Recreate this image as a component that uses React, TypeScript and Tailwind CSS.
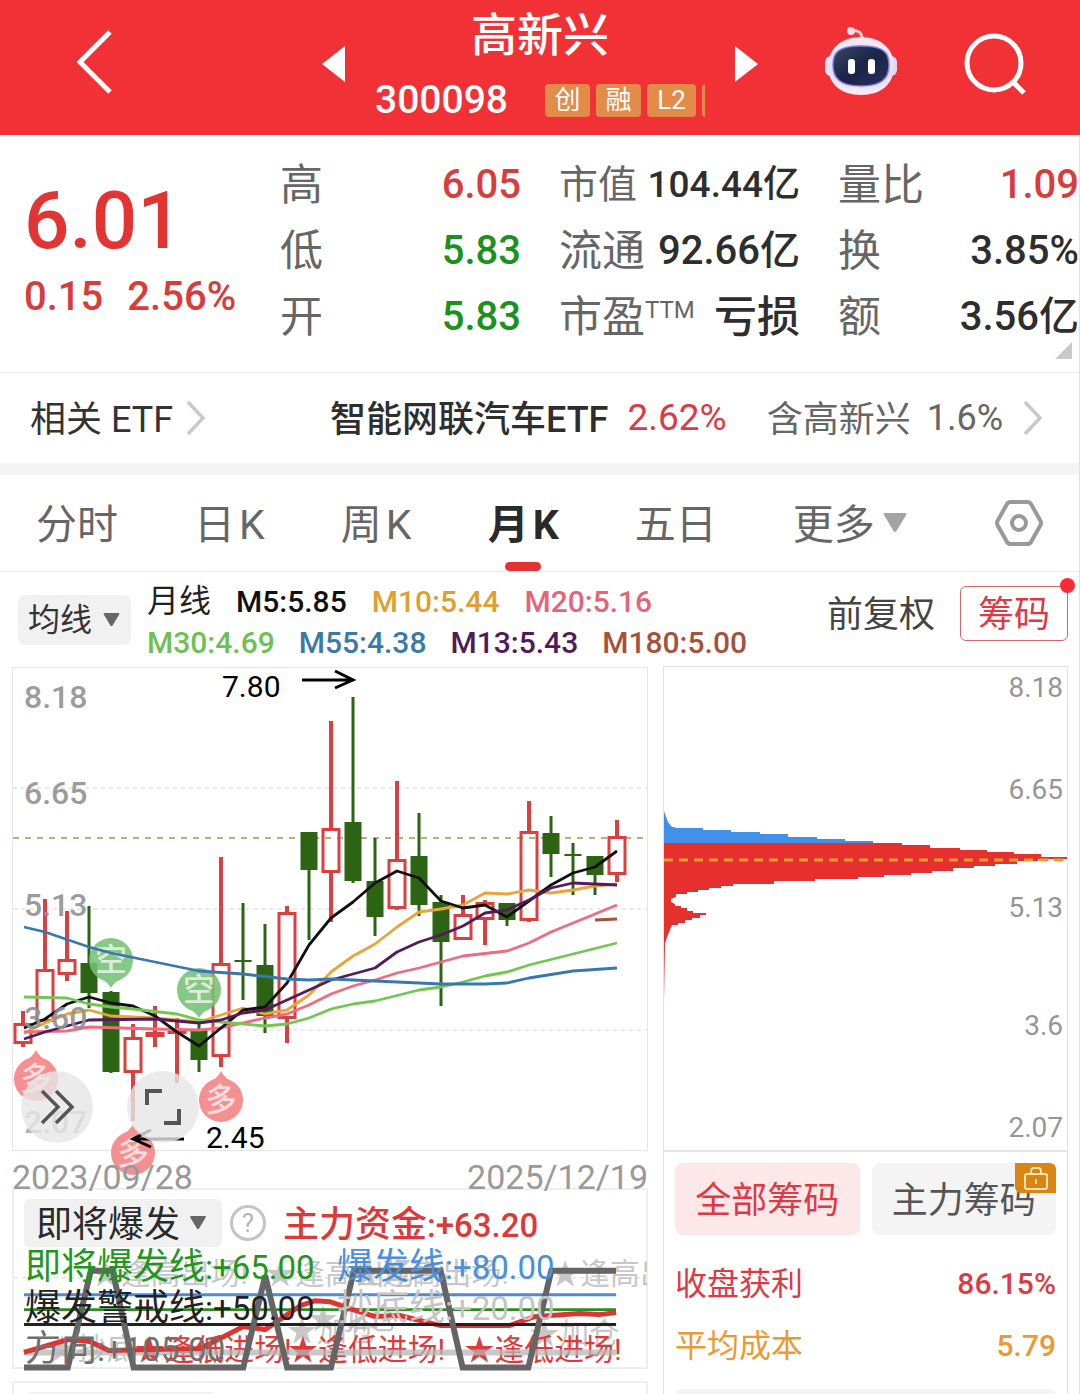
import React from "react";

const FONT = "font-['Roboto','Noto_Sans_CJK_SC',sans-serif]";

type Candle = { x: number; hi: number; top: number; bot: number; lo: number; up: boolean };

const CANDLES: Candle[] = [
  { x: 23, hi: 1011, top: 1023, bot: 1044, lo: 1047, up: true },
  { x: 45, hi: 899, top: 969, bot: 1022, lo: 1022, up: true },
  { x: 67, hi: 911, top: 959, bot: 975, lo: 981, up: true },
  { x: 89, hi: 906, top: 963, bot: 993, lo: 1008, up: false },
  { x: 111, hi: 991, top: 992, bot: 1072, lo: 1073, up: false },
  { x: 133, hi: 1024, top: 1037, bot: 1073, lo: 1121, up: true },
  { x: 155, hi: 1006, top: 1032, bot: 1037, lo: 1047, up: true },
  { x: 177, hi: 1018, top: 1031, bot: 1034, lo: 1083, up: true },
  { x: 199, hi: 1023, top: 1030, bot: 1060, lo: 1072, up: false },
  { x: 221, hi: 857, top: 963, bot: 1057, lo: 1067, up: true },
  { x: 243, hi: 903, top: 960, bot: 962, lo: 1000, up: false },
  { x: 265, hi: 924, top: 965, bot: 1016, lo: 1033, up: false },
  { x: 287, hi: 906, top: 912, bot: 1019, lo: 1043, up: true },
  { x: 309, hi: 832, top: 832, bot: 870, lo: 940, up: false },
  { x: 331, hi: 721, top: 828, bot: 873, lo: 922, up: true },
  { x: 353, hi: 697, top: 822, bot: 881, lo: 883, up: false },
  { x: 375, hi: 838, top: 881, bot: 917, lo: 936, up: false },
  { x: 397, hi: 781, top: 859, bot: 909, lo: 910, up: true },
  { x: 419, hi: 813, top: 856, bot: 905, lo: 916, up: false },
  { x: 441, hi: 895, top: 902, bot: 942, lo: 1006, up: false },
  { x: 463, hi: 895, top: 914, bot: 940, lo: 940, up: true },
  { x: 485, hi: 900, top: 902, bot: 920, lo: 945, up: true },
  { x: 507, hi: 903, top: 903, bot: 920, lo: 926, up: false },
  { x: 529, hi: 801, top: 831, bot: 921, lo: 922, up: true },
  { x: 551, hi: 816, top: 833, bot: 854, lo: 877, up: false },
  { x: 573, hi: 843, top: 854, bot: 856, lo: 895, up: false },
  { x: 595, hi: 856, top: 856, bot: 875, lo: 895, up: false },
  { x: 617, hi: 820, top: 836, bot: 875, lo: 882, up: true },
];

const AVERAGES: { color: string; points: string }[] = [
  { color: "#e9a53a", points: "24,1033 45,1023 67,1014 89,1010 111,1016 155,1018 199,1022 221,1015 243,1008 265,1014 287,1010 309,995 331,972 353,956 375,944 397,927 419,912 441,909 463,905 485,893 507,894 529,890 551,893 573,890 595,886 617,884" },
  { color: "#ee6c82", points: "24,1032 67,1031 89,1027 155,1029 199,1030 221,1028 265,1018 287,1014 309,1005 331,994 353,986 375,980 397,973 419,968 441,962 463,956 507,951 529,943 551,932 595,914 617,905" },
  { color: "#111111", points: "24,1028 45,1019 67,1004 89,997 111,1003 133,1006 155,1016 177,1032 199,1046 221,1028 243,1010 265,1007 287,983 309,945 331,918 353,902 375,883 397,871 419,878 441,901 463,908 485,905 507,917 529,901 551,885 573,873 595,867 617,851" },
  { color: "#73c653", points: "24,997 67,998 89,1004 111,1007 133,1009 177,1014 199,1020 221,1022 265,1026 287,1024 309,1018 331,1009 353,1004 375,1001 419,990 441,987 463,982 485,976 507,972 529,965 573,954 617,943" },
  { color: "#541a5c", points: "24,1039 45,1032 89,1020 155,1019 199,1023 221,1020 243,1013 265,1010 287,1000 309,990 331,980 353,974 375,968 397,952 419,942 441,935 463,926 485,913 507,910 529,900 551,888 573,883 617,885" },
  { color: "#3778ae", points: "24,927 45,932 89,947 111,953 155,962 199,971 243,974 287,979 309,980 331,979 375,981 397,982 441,984 485,984 507,983 529,978 573,971 617,968" },
  { color: "#a4523c", points: "595,920 617,919" },
];

const PINS = [
  { x: 111, y: 960, long: false },
  { x: 199, y: 990, long: false },
  { x: 36, y: 1079, long: true },
  { x: 133, y: 1153, long: true },
  { x: 221, y: 1100, long: true },
];

function PriceChart() {
  return (
    <svg viewBox="13 668 634 482" className="block w-full overflow-visible" role="img" aria-label="月K线图">
      {[788, 909, 1030].map((y) => (
        <line key={y} x1="13" x2="647" y1={y} y2={y} stroke="#e4e4e4" strokeWidth="1.5" strokeDasharray="4 4" />
      ))}
      <line x1="13" x2="643" y1="838" y2="838" stroke="#c9a878" strokeWidth="2" strokeDasharray="6 6" />
      {CANDLES.map((c) => {
        const h = c.bot - c.top;
        if (!c.up)
          return (
            <g key={c.x} fill="#2d6413">
              <rect x={c.x - 1.5} y={c.hi} width="3" height={c.lo - c.hi} />
              <rect x={c.x - 8.5} y={c.top} width="17" height={h} />
            </g>
          );
        return (
          <g key={c.x} fill="#d9403f">
            <rect x={c.x - 2} y={c.hi} width="4" height={c.top - c.hi} />
            <rect x={c.x - 2} y={c.bot} width="4" height={c.lo - c.bot} />
            {h < 8 ? (
              <rect x={c.x - 9.5} y={c.top} width="19" height={h} />
            ) : (
              <rect x={c.x - 8} y={c.top + 1.5} width="16" height={h - 3} fill="none" stroke="#d9403f" strokeWidth="3" />
            )}
          </g>
        );
      })}
      {PINS.map((p) => (
        <g key={p.x} opacity="0.88">
          <g fill={p.long ? "#f58080" : "#76c176"}>
            <circle cx={p.x} cy={p.y} r="22" />
            {p.long ? (
              <path d={`M${p.x - 14} ${p.y - 16} Q${p.x - 3} ${p.y - 22} ${p.x} ${p.y - 29} Q${p.x + 3} ${p.y - 22} ${p.x + 14} ${p.y - 16}Z`} />
            ) : (
              <path d={`M${p.x - 14} ${p.y + 16} Q${p.x - 3} ${p.y + 22} ${p.x} ${p.y + 28} Q${p.x + 3} ${p.y + 22} ${p.x + 14} ${p.y + 16}Z`} />
            )}
          </g>
          <text x={p.x} y={p.y + 11} textAnchor="middle" fontSize="32" fontWeight="500" fill="#fff" fillOpacity="0.7">
            {p.long ? "多" : "空"}
          </text>
        </g>
      ))}
      <g fill="none" strokeWidth="2.8" strokeLinejoin="round">
        {AVERAGES.map((a) => (
          <polyline key={a.color} points={a.points} stroke={a.color} />
        ))}
      </g>
      <g fill="#929292" fontSize="32" fontWeight="500" fillOpacity="0.92">
        <text x="24" y="708">8.18</text>
        <text x="24" y="804">6.65</text>
        <text x="24" y="916">5.13</text>
        <text x="24" y="1029">3.60</text>
        <text x="24" y="1133" fillOpacity="0.7">2.07</text>
      </g>
      <g fontSize="30" fill="#000">
        <text x="222" y="697">7.80</text>
        <text x="206" y="1148">2.45</text>
      </g>
      <g fill="none" stroke="#000" strokeWidth="3">
        <path d="M302 680H352M335 671L353 680L335 688" />
        <path d="M184 1139H134M151 1130L133 1139L151 1147" />
      </g>
    </svg>
  );
}

const GHOSTS = [
  { x: 90, y: 1284, t: "★逢高出场!" },
  { x: 265, y: 1284, t: "★逢高出场!" },
  { x: 352, y: 1284, t: "★逢高出场!" },
  { x: 551, y: 1284, t: "★逢高出场!" },
  { x: 308, y: 1329, t: "★加仓" },
  { x: 287, y: 1341, t: "★加仓" },
  { x: 530, y: 1344, t: "★加仓" },
  { x: 46, y: 1360, t: "★抄底" },
];

function SignalChart() {
  return (
    <svg viewBox="13 1190 634 178" className="block w-full overflow-visible" role="img" aria-label="即将爆发指标">
      <clipPath id="plot">
        <rect x="13" y="1190" width="635" height="178" />
      </clipPath>
      <line x1="13" x2="647" y1="1278" y2="1278" stroke="#e4e4e4" strokeWidth="1.5" strokeDasharray="4 4" />
      <g fontSize="30" fill="#bdbdbd" fillOpacity="0.85" clipPath="url(#plot)">
        {GHOSTS.map((g) => (
          <text key={`${g.x}-${g.y}`} x={g.x} y={g.y}>{g.t}</text>
        ))}
      </g>
      <g fontSize="30" fill="#dc3b3b">
        {[134, 288, 465].map((x) => (
          <text key={x} x={x} y="1361">★逢低进场!</text>
        ))}
      </g>
      <g fill="none">
        <path d="M23 1353H617" stroke="#b5b5b5" strokeOpacity="0.75" strokeWidth="6" />
        <path d="M23 1295H617" stroke="#4a8ae0" strokeWidth="3" />
        <path d="M23 1310H617" stroke="#2b8f1f" strokeWidth="3" />
        <polyline
          points="23,1353 67,1340 89,1342 108,1351 150,1350 200,1349 243,1327 265,1330 300,1306 315,1301 330,1302 350,1309 375,1317 400,1316 441,1326 510,1326 535,1317 580,1314 600,1315 617,1313"
          stroke="#dd3532"
          strokeWidth="5"
        />
        <path d="M23 1325H617" stroke="#222" strokeWidth="3" />
        <polyline
          points="23,1368 67,1368 90,1271 112,1271 133,1368 243,1368 265,1276 287,1368 331,1368 354,1271 441,1271 463,1368 529,1368 552,1271 617,1271"
          stroke="#656565"
          strokeWidth="6"
        />
      </g>
    </svg>
  );
}

const CHIP_BLUE =
  "M664 811L668 822L672 827H675V828H703V830H731V832H760V834H788V837H817V839H845V841H873V844H664Z";
const CHIP_RED =
  "M664 843H902V845H930V848H960V850H987V852H1014V854H1041V857H1067V859H1038V861H1017V864H995V866H974V868H953V871H932V873H911V875H884V877H858V879H815V881H774V884H733V886H721V888H709V890H698V892H687V894H676V897L671 899V902L675 904V906H681V908H687V911H693V913H706V915H700V918H692V920H685V923H678V925H672L667 937L665 944L664 1000Z";

function ChipChart() {
  return (
    <svg viewBox="664 667 403 483" className="block w-full" role="img" aria-label="筹码分布">
      <path d={CHIP_BLUE} fill="#4390ea" />
      <path d={CHIP_RED} fill="#e6302e" />
      <line x1="664" x2="1067" y1="860" y2="860" stroke="#f39a30" strokeWidth="3" strokeDasharray="9 6" />
      <g fontSize="28" fill="#969696" textAnchor="end">
        <text x="1063" y="697">8.18</text>
        <text x="1063" y="799">6.65</text>
        <text x="1063" y="917">5.13</text>
        <text x="1063" y="1035">3.6</text>
        <text x="1063" y="1137">2.07</text>
      </g>
    </svg>
  );
}

function Robot() {
  return (
    <svg viewBox="824 26 74 70" className="h-[70px] w-[74px]" aria-hidden="true">
      <defs>
        <linearGradient id="shell" x1="0" y1="0" x2="0" y2="1">
          <stop offset="0" stopColor="#fbe9f0" />
          <stop offset="0.6" stopColor="#dfe0fb" />
          <stop offset="1" stopColor="#f7ecf8" />
        </linearGradient>
        <linearGradient id="visor" x1="0" y1="0" x2="1" y2="1">
          <stop offset="0" stopColor="#3a4668" />
          <stop offset="0.5" stopColor="#1b2545" />
          <stop offset="1" stopColor="#2a2f60" />
        </linearGradient>
      </defs>
      <path d="M852 32C859 31 862 34 862 40" fill="none" stroke="#f6c9d8" strokeWidth="3" />
      <circle cx="851" cy="32" r="4" fill="#f9dbe6" />
      <rect x="825" y="57" width="12" height="20" rx="6" fill="#f3e4f3" />
      <rect x="885" y="57" width="12" height="20" rx="6" fill="#e3d5f5" />
      <path d="M861 38C883 38 894 52 894 67C894 85 881 96 861 96C841 96 828 85 828 67C828 52 839 38 861 38Z" fill="url(#shell)" />
      <path d="M861 47C883 47 889 53 889 66C889 80 881 87 861 87C841 87 833 80 833 66C833 53 839 47 861 47Z" fill="url(#visor)" stroke="#7a7be0" strokeWidth="1.5" />
      <rect x="848" y="60" width="7" height="15" rx="3" fill="#fff" />
      <rect x="868" y="60" width="7" height="15" rx="3" fill="#fff" />
    </svg>
  );
}

function Header() {
  return (
    <header className="grid h-[135px] grid-cols-[1fr_436px_1fr] items-center bg-[#f13135] text-white">
      <button aria-label="返回" className="ml-[74px] w-10 justify-self-start pb-3">
        <svg viewBox="0 0 40 64" className="h-16 w-10" fill="none" stroke="#fff" strokeWidth="5">
          <path d="M36 2L6 32L36 62" />
        </svg>
      </button>
      <div className="flex h-full items-center justify-between">
        <button aria-label="上一只" className="pb-2">
          <svg viewBox="0 0 24 36" className="h-9 w-6" fill="#fff"><path d="M0 18L23 0V36Z" /></svg>
        </button>
        <div className="flex h-full w-[330px] flex-col items-center">
          <h1 className="mt-[5px] text-[46px] font-medium leading-[60px]">高新兴</h1>
          <div className="mt-[11px] flex w-full items-center overflow-hidden">
            <span className="w-[170px] shrink-0 text-[39px] font-medium leading-[48px]">300098</span>
            <div className="flex gap-[6px] text-[26px] leading-[33px]">
              <span className="w-[45px] shrink-0 rounded bg-[#e38b49] text-center">创</span>
              <span className="w-[45px] shrink-0 rounded bg-[#e38b49] text-center">融</span>
              <span className="w-[49px] shrink-0 rounded bg-[#e38b49] text-center">L2</span>
              <span className="w-[45px] shrink-0 rounded bg-[#e38b49]" />
            </div>
          </div>
        </div>
        <button aria-label="下一只" className="pb-2">
          <svg viewBox="0 0 24 36" className="h-9 w-6" fill="#fff"><path d="M24 18L1 0V36Z" /></svg>
        </button>
      </div>
      <div className="flex items-center justify-between pb-4 pl-[66px] pr-[52px]">
        <button aria-label="智能助手"><Robot /></button>
        <button aria-label="搜索" className="pt-2">
          <svg viewBox="0 0 64 64" className="size-16" fill="none" stroke="#fff" strokeWidth="5">
            <circle cx="30" cy="31" r="27" />
            <path d="M49 50L60 61" />
          </svg>
        </button>
      </div>
    </header>
  );
}

const RED = "text-[#d93c3c]";
const GREEN = "text-[#1d901d]";
const DARK = "text-[#2e2e2e]";

const QUOTES: { label: string; sup?: string; value: string; tone: string; small?: boolean }[] = [
  { label: "高", value: "6.05", tone: RED },
  { label: "市值", value: "104.44亿", tone: DARK, small: true },
  { label: "量比", value: "1.09", tone: RED },
  { label: "低", value: "5.83", tone: GREEN },
  { label: "流通", value: "92.66亿", tone: DARK },
  { label: "换", value: "3.85%", tone: DARK },
  { label: "开", value: "5.83", tone: GREEN },
  { label: "市盈", sup: "TTM", value: "亏损", tone: DARK },
  { label: "额", value: "3.56亿", tone: DARK },
];

function QuotePanel() {
  return (
    <section className="relative flex h-[238px] border-b border-[#ededed] pt-[17px]">
      <div className="w-[280px] shrink-0 pl-6">
        <div className="pt-[21px] text-[80px] font-medium leading-[96px] text-[#e33434]">6.01</div>
        <div className="flex gap-6 text-[40px] font-medium leading-[56px] text-[#d93c3c]">
          <span>0.15</span>
          <span>2.56%</span>
        </div>
      </div>
      <dl className="grid flex-1 auto-rows-[66px] grid-cols-3 gap-x-[38px]">
        {QUOTES.map((q) => (
          <div key={q.label} className="flex items-center justify-between whitespace-nowrap leading-[66px]">
            <dt className={q.small ? "text-[39px] text-[#666]" : "text-[43px] text-[#666]"}>
              {q.label}
              {q.sup && <sup className="top-[-14px] text-[24px] leading-none">{q.sup}</sup>}
            </dt>
            <dd className={`${q.small ? "text-[37px]" : q.sup ? "text-[43px]" : "text-[40px]"} font-medium ${q.tone}`}>{q.value}</dd>
          </div>
        ))}
      </dl>
      <svg viewBox="0 0 17 17" className="absolute bottom-[13px] right-[7px] size-[17px]" fill="#c9c9c9" aria-hidden="true">
        <path d="M17 0V17H0Z" />
      </svg>
    </section>
  );
}

function Chevron() {
  return (
    <svg viewBox="0 0 20 36" className="h-9 w-5 shrink-0" fill="none" stroke="#c9c9c9" strokeWidth="3.5" aria-hidden="true">
      <path d="M2 2L17 18L2 34" />
    </svg>
  );
}

function Caret({ className }: { className: string }) {
  return (
    <svg viewBox="0 0 24 20" className={className} fill="currentColor" aria-hidden="true">
      <path d="M2 0H22Q24 0 23 2L13.500 18Q12 20 10.500 18L1 2Q0 0 2 0Z" />
    </svg>
  );
}

function EtfRow() {
  return (
    <section className="flex h-[102px] items-center justify-between whitespace-nowrap border-b-12 border-[#f4f4f4] pl-[30px] pr-9 text-[36px] leading-[54px]">
      <a href="#etf" className="flex items-center gap-[13px] text-[#333]">
        <span className="pt-1">相关 ETF</span>
        <Chevron />
      </a>
      <a href="#auto-etf" className="flex items-center">
        <span className="pt-1 font-medium text-[#2e2e2e]">智能网联汽车ETF</span>
        <span className="ml-[19px] text-[37px] text-[#dc3a44]">2.62%</span>
        <span className="ml-10 pt-1 text-[#666]">含高新兴</span>
        <span className="ml-4 mr-5 text-[#666]">1.6%</span>
        <Chevron />
      </a>
    </section>
  );
}

const TABS = [
  { name: "分时" },
  { name: "日", suffix: "K" },
  { name: "周", suffix: "K" },
  { name: "月", suffix: "K", on: true },
  { name: "五日" },
];

function Tabs() {
  return (
    <nav role="tablist" className="flex h-[97px] items-stretch justify-between whitespace-nowrap border-b border-[#ebebeb] pl-9 pr-9 text-[41px] leading-[92px] text-[#666]">
      {TABS.map((t) => (
        <button key={t.name} role="tab" aria-selected={!!t.on} className={t.on ? "relative pt-1 font-bold text-[#2a2a2a]" : "relative pt-1"}>
          {t.name}
          {t.suffix && <span className="ml-1">{t.suffix}</span>}
          {t.on && <span className="absolute bottom-0 left-1/2 h-[9px] w-9 -translate-x-1/2 rounded-full bg-[#e43234]" />}
        </button>
      ))}
      <button aria-haspopup="menu" className="mr-3 flex items-center gap-2">
        <span className="pt-1">更多</span>
        <Caret className="h-5 w-6 text-[#a3a3a3]" />
      </button>
      <button aria-label="设置">
        <svg viewBox="0 0 48 48" className="size-12" fill="none" stroke="#999" strokeWidth="4" strokeLinejoin="round">
          <path d="M16 3H32Q35 3 36 5L45 21Q47 24 45 27L36 43Q35 45 32 45H16Q13 45 12 43L3 27Q1 24 3 21L12 5Q13 3 16 3Z" />
          <circle cx="24" cy="24" r="7" />
        </svg>
      </button>
    </nav>
  );
}

function Legend() {
  return (
    <section className="flex h-[95px] items-start justify-between whitespace-nowrap pl-[18px] pr-[11px]">
      <div className="flex">
        <div className="relative mt-[23px] h-[50px] w-[113px] rounded-md bg-[#f1f1f1]">
          <select aria-label="主图指标" className="h-full w-full appearance-none bg-transparent pl-[10px] text-[32px] leading-[50px] text-[#333]">
            <option>均线</option>
          </select>
          <Caret className="pointer-events-none absolute right-[10px] top-[18px] h-[14px] w-[19px] text-[#666]" />
        </div>
        <div className="ml-4 mt-[9px] text-[30px] font-medium leading-[41px]">
          <div className="flex gap-[25px]">
            <span className="text-[32px] font-normal text-[#222]">月线</span>
            <span className="text-[#111]">M5:5.85</span>
            <span className="text-[#e0a030]">M10:5.44</span>
            <span className="text-[#e3657a]">M20:5.16</span>
          </div>
          <div className="flex gap-6">
            <span className="text-[#6fc052]">M30:4.69</span>
            <span className="text-[#3b79a8]">M55:4.38</span>
            <span className="text-[#4f1b58]">M13:5.43</span>
            <span className="text-[#a4523c]">M180:5.00</span>
          </div>
        </div>
      </div>
      <div className="mt-[12px] flex items-center gap-[25px] text-[36px]">
        <button className="pt-1 leading-[54px] text-[#444]">前复权</button>
        <button className="relative h-[55px] w-[108px] rounded-md border border-[#d9646a] pt-0.5 leading-[52px] text-[#dc3a44]">
          筹码
          <span className="absolute -right-[8px] -top-[9px] size-[15px] rounded-full bg-[#fb2a37]" />
        </button>
      </div>
    </section>
  );
}

function Reading({ name, value, className }: { name: string; value: string; className: string }) {
  return (
    <span className={className}>
      {name}
      <span className="text-[33px]">:{value}</span>
    </span>
  );
}

function SignalPanel() {
  return (
    <section className="relative border-2 border-[#efefef]">
      <SignalChart />
      <div className="absolute inset-x-0 top-0 pl-[10px] pt-[9px] text-[36px] leading-10">
        <div className="flex h-12 items-center">
          <div className="relative h-12 w-[198px] rounded-md bg-[#f1f1f1]">
            <select aria-label="副图指标" className="h-full w-full appearance-none bg-transparent pl-[12px] pt-1 text-[36px] leading-[44px] text-[#2a2a2a]">
              <option>即将爆发</option>
            </select>
            <Caret className="pointer-events-none absolute right-[14px] top-[17px] h-[14px] w-[20px] text-[#666]" />
          </div>
          <button aria-label="帮助" className="ml-2 size-9 rounded-full border-3 border-[#c4c4c4] text-center text-[26px] leading-[30px] text-[#b5b5b5]">?</button>
          <Reading name="主力资金" value="+63.20" className="ml-[17px] pt-1 font-medium text-[#db3a38]" />
        </div>
        <div className="grid grid-cols-[312px_1fr] whitespace-nowrap pl-px leading-10">
          <Reading name="即将爆发线" value="+65.00" className="text-[#1f971c]" />
          <Reading name="爆发线" value="+80.00" className="text-[#4a8fdc]" />
          <Reading name="爆发警戒线" value="+50.00" className="text-[#222]" />
          <Reading name="抄底线" value="+20.00" className="text-[#c4c4c4]" />
          <Reading name="方向" value="+105.00" className="text-[#707070]" />
        </div>
      </div>
    </section>
  );
}

function ChipPanel() {
  return (
    <aside className="-mt-px border-x border-t border-[#e2e2e2]">
      <ChipChart />
      <div className="border-t-2 border-[#e6e6e6] px-[11px] pt-[11px]">
        <div className="grid grid-cols-2 gap-3 pb-[18px] text-[36px] leading-[68px]">
          <button className="rounded-lg bg-[#fde8e9] pt-1 text-[#dc3a44]">全部筹码</button>
          <button className="relative rounded-lg bg-[#f4f4f4] pt-1 text-[#555]">
            主力筹码
            <span className="absolute right-0 top-0 flex h-[30px] w-[41px] items-center justify-center rounded-tr-md rounded-bl-md bg-[#da8412]">
              <svg viewBox="0 0 24 24" className="size-6" fill="none" stroke="#fbe3b8" strokeWidth="2" aria-label="锁定">
                <rect x="1" y="8" width="22" height="15" rx="2" />
                <path d="M7 8V5Q7 2 10 2H14Q17 2 17 5V8M12 13V18" />
              </svg>
            </span>
          </button>
        </div>
        <dl className="whitespace-nowrap text-[32px] leading-[62px]">
          <div className="flex justify-between text-[#dc3a44]">
            <dt>收盘获利</dt>
            <dd className="text-[30px] font-medium">86.15%</dd>
          </div>
          <div className="flex justify-between text-[#e99a35]">
            <dt>平均成本</dt>
            <dd className="text-[30px] font-medium">5.79</dd>
          </div>
        </dl>
        <div className="mt-3 h-16 rounded-lg bg-[#f4f4f4]" />
      </div>
    </aside>
  );
}

export default function App() {
  return (
    <div className={`h-screen overflow-hidden bg-white ${FONT}`}>
      <Header />
      <main className="border-r border-[#e2e2e2]">
        <QuotePanel />
        <EtfRow />
        <Tabs />
        <Legend />
        <div className="grid grid-cols-[636fr_405fr] gap-[15px] pl-3 pr-[11px]">
          <div>
            <section className="relative z-10 border border-[#e6e6e6]">
              <PriceChart />
              <button aria-label="展开" className="absolute bottom-[7px] left-2 flex size-[72px] items-center justify-center rounded-full bg-[#e6e6e6]/80">
                <svg viewBox="0 0 36 36" className="size-9" fill="none" stroke="#555" strokeWidth="3.500">
                  <path d="M3 2L19 18L3 34M17 2L33 18L17 34" />
                </svg>
              </button>
              <button aria-label="全屏" className="absolute bottom-[7px] left-[114px] flex size-[72px] items-center justify-center rounded-full bg-[#e6e6e6]/80">
                <svg viewBox="0 0 36 36" className="size-9" fill="none" stroke="#555" strokeWidth="4">
                  <path d="M2 16V2H17M34 20V34H19" />
                </svg>
              </button>
            </section>
            <div className="flex h-[37px] justify-between text-[34px] leading-[52px] text-[#999]">
              <time className="relative z-20" dateTime="2023-09-28">2023/09/28</time>
              <time className="relative z-20" dateTime="2025-12-19">2025/12/19</time>
            </div>
            <SignalPanel />
            <section className="mt-3 border-2 border-[#efefef] pl-3 pt-[9px]">
              <div className="h-12 w-[190px] rounded-md bg-[#f1f1f1]" />
            </section>
          </div>
          <ChipPanel />
        </div>
      </main>
    </div>
  );
}
